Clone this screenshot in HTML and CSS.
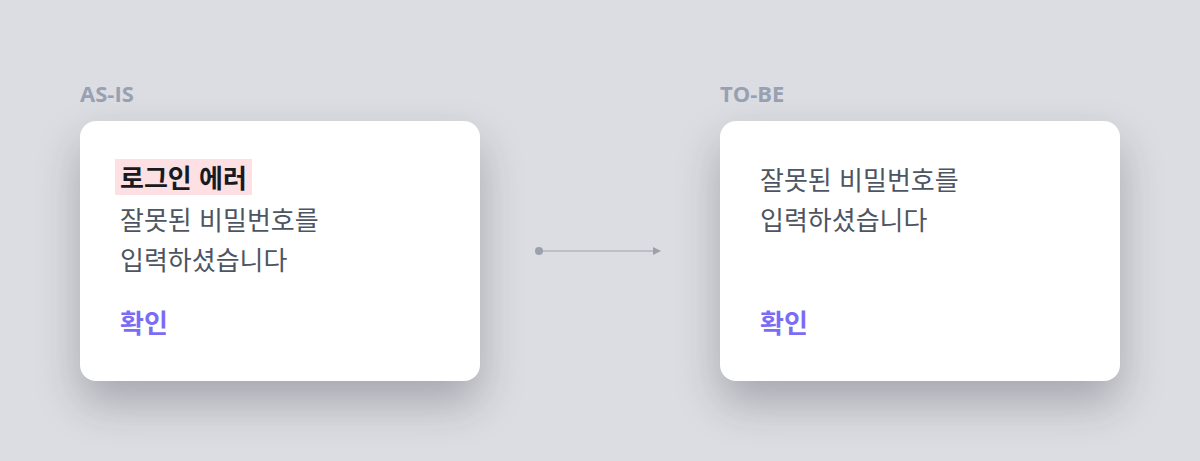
FILE: index.html
```html
<!DOCTYPE html>
<html lang="ko">
<head>
<meta charset="utf-8">
<link rel="stylesheet" href="styles.css">
</head>
<body>
<main class="compare">
  <div class="label label-as">AS-IS</div>
  <div class="label label-to">TO-BE</div>
  <section class="card card-as">
    <div class="title"><span class="title-mark">로그인 에러</span></div>
    <p class="msg">잘못된 비밀번호를<br>입력하셨습니다</p>
    <div class="action">확인</div>
  </section>
  <div class="arrow">
    <svg width="128" height="12" viewBox="0 0 128 12">
      <circle cx="4" cy="6" r="4" fill="#9aa1ad"/>
      <line x1="4" y1="6" x2="120" y2="6" stroke="#9aa1ad" stroke-width="1.2"/>
      <path d="M118 2 L126 6 L118 10 Z" fill="#9aa1ad"/>
    </svg>
  </div>
  <section class="card card-to">
    <p class="msg">잘못된 비밀번호를<br>입력하셨습니다</p>
    <div class="action">확인</div>
  </section>
</main>
</body>
</html>
```
FILE: styles.css
```css
html, body {
  margin: 0;
  padding: 0;
  background: #dcdde2;
}
body {
  font-family: "Noto Sans CJK KR", "Noto Sans", sans-serif;
  width: 1200px;
  height: 461px;
  overflow: hidden;
}
.compare {
  display: grid;
  grid-template-columns: 400px 240px 400px;
  grid-template-rows: 24px 260px;
  row-gap: 16px;
  padding: 81px 80px 0;
}
.label {
  font-family: "Open Sans", "Noto Sans", sans-serif;
  font-weight: 700;
  font-size: 22px;
  line-height: 24px;
  color: #98a1b1;
}
.label-as { grid-column: 1; grid-row: 1; }
.label-to { grid-column: 3; grid-row: 1; }
.card {
  grid-row: 2;
  background: #ffffff;
  border-radius: 16px;
  box-shadow: 0 22px 44px rgba(30, 32, 45, 0.28);
  padding: 38px 40px 39px;
  display: flex;
  flex-direction: column;
  box-sizing: border-box;
}
.card-as { grid-column: 1; }
.card-to { grid-column: 3; }
.title {
  line-height: 36px;
  height: 36px;
}
.title-mark {
  display: inline-block;
  background: #fde0e3;
  color: #171a21;
  font-weight: 700;
  font-size: 26px;
  line-height: 36px;
  padding: 0 5px;
  margin-left: -5px;
}
.msg {
  margin: 4px 0 0;
  font-size: 26px;
  line-height: 40px;
  color: #4d5563;
}
.card-to .msg { margin-top: 0; }
.action {
  margin-top: auto;
  font-size: 26px;
  line-height: 40px;
  font-weight: 700;
  color: #7b6cf6;
}
.arrow {
  grid-column: 2;
  grid-row: 2;
  display: flex;
  align-items: center;
  justify-content: center;
}
.arrow svg { display: block; margin-left: -2px; }
```
